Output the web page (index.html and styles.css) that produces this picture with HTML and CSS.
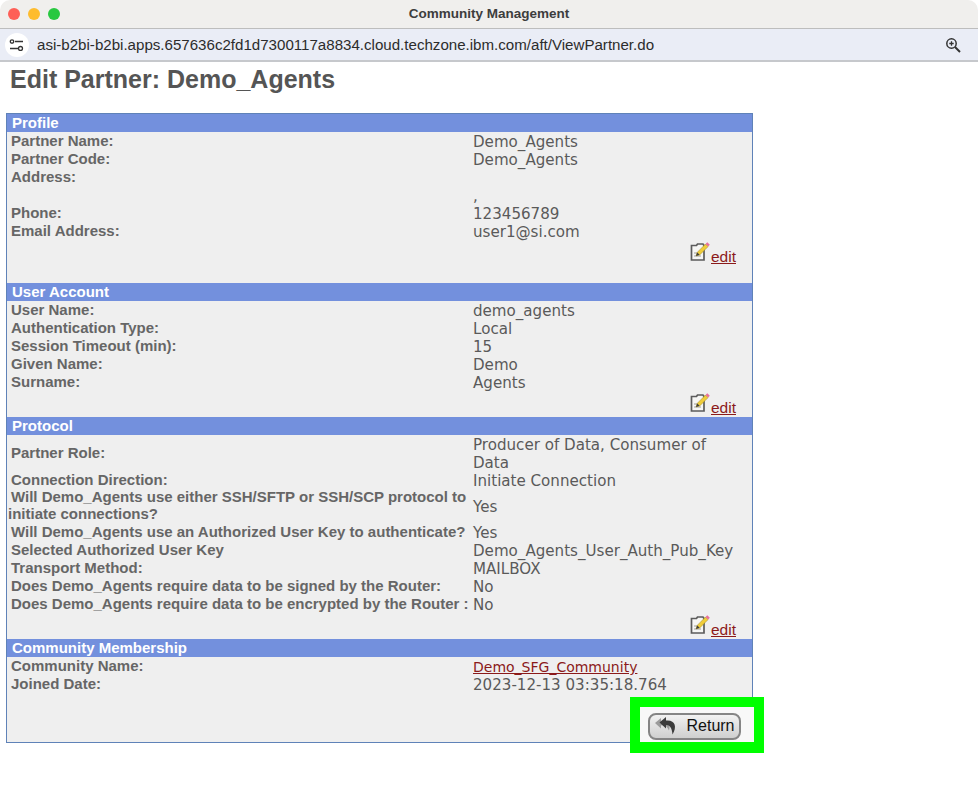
FILE: index.html
```html
<!DOCTYPE HTML>
<html>
<head>
    <title>Community Management</title>
    <meta charset="utf-8">
    <link rel="stylesheet" href="styles.css">
</head>
<body>
<svg class="defs" width="0" height="0">
    <symbol id="edit-icon" viewBox="0 0 20 20">
        <path d="M1.500 3.500h5l1-1.500h5.500l1 1.500v14.500h-12.500z" fill="#f6f6f4" stroke="#5c5c5c" stroke-width="1.700"/>
        <path d="M4 11h4M4 14h7" stroke="#a0a0a0" stroke-width="1"/>
        <path d="M6 14l1.200-3.600 8.300-8.400 2.600 2.600-8.400 8.300z" fill="#f0cd3a" stroke="#9a8420" stroke-width=".5"/>
        <path d="M15.500 2l1.800-1.700 2.500 2.500-1.700 1.800z" fill="#e8719a"/>
        <path d="M6 14l1.200-3.600 2.400 2.400z" fill="#3e3e3e"/>
    </symbol>
</svg>

<!--browser window top-->
<div class="titlebar">
    <div class="lights"><i class="red"></i><i class="yellow"></i><i class="green"></i></div>
    <div class="wintitle">Community Management</div>
</div>
<div class="urlbar">
    <span class="siteinfo">
        <svg width="16" height="12" viewBox="0 0 16 12"><path d="M6 2.500h8M1 9.500h8" stroke="#333" stroke-width="1.500" fill="none"/><circle cx="3" cy="2.500" r="1.700" fill="#fff" stroke="#333" stroke-width="1.300"/><circle cx="11.500" cy="9.500" r="2" fill="#fff" stroke="#333" stroke-width="1.300"/></svg>
    </span>
    <span class="url">asi-b2bi-b2bi.apps.657636c2fd1d7300117a8834.cloud.techzone.ibm.com/aft/ViewPartner.do</span>
    <svg class="zoomicon" width="16" height="16" viewBox="0 0 16 16"><circle cx="6.500" cy="6.500" r="4.700" fill="none" stroke="#333" stroke-width="1.500"/><path d="M10 10l5 5" stroke="#333" stroke-width="2"/><path d="M4.300 6.500h4.400M6.500 4.300v4.400" stroke="#333" stroke-width="1.300"/></svg>
</div>

<!--page content-->
<div class="page">
    <h1>Edit Partner: Demo_Agents</h1>
    <div class="panel">
        <div class="head">Profile</div>
        <div class="row"><div class="lab">Partner Name:</div><div class="val">Demo_Agents</div></div>
        <div class="row"><div class="lab">Partner Code:</div><div class="val">Demo_Agents</div></div>
        <div class="row"><div class="lab">Address:</div><div class="val"></div></div>
        <div class="row"><div class="lab"></div><div class="val">,</div></div>
        <div class="row"><div class="lab">Phone:</div><div class="val">123456789</div></div>
        <div class="row"><div class="lab">Email Address:</div><div class="val">user1@si.com</div></div>
        <div class="editrow tall"><svg class="ico" width="20" height="20"><use href="#edit-icon"/></svg><a href="#">edit</a></div>

        <div class="head">User Account</div>
        <div class="row"><div class="lab">User Name:</div><div class="val">demo_agents</div></div>
        <div class="row"><div class="lab">Authentication Type:</div><div class="val">Local</div></div>
        <div class="row"><div class="lab">Session Timeout (min):</div><div class="val">15</div></div>
        <div class="row"><div class="lab">Given Name:</div><div class="val">Demo</div></div>
        <div class="row"><div class="lab">Surname:</div><div class="val">Agents</div></div>
        <div class="editrow"><svg class="ico" width="20" height="20"><use href="#edit-icon"/></svg><a href="#">edit</a></div>

        <div class="head">Protocol</div>
        <div class="row"><div class="lab">Partner Role:</div><div class="val">Producer of Data, Consumer of Data</div></div>
        <div class="row"><div class="lab">Connection Direction:</div><div class="val">Initiate Connection</div></div>
        <div class="row"><div class="lab">Will Demo_Agents use either SSH/SFTP or SSH/SCP protocol to initiate connections?</div><div class="val">Yes</div></div>
        <div class="row"><div class="lab">Will Demo_Agents use an Authorized User Key to authenticate?</div><div class="val">Yes</div></div>
        <div class="row"><div class="lab">Selected Authorized User Key</div><div class="val">Demo_Agents_User_Auth_Pub_Key</div></div>
        <div class="row"><div class="lab">Transport Method:</div><div class="val">MAILBOX</div></div>
        <div class="row"><div class="lab">Does Demo_Agents require data to be signed by the Router:</div><div class="val">No</div></div>
        <div class="row"><div class="lab">Does Demo_Agents require data to be encrypted by the Router :</div><div class="val">No</div></div>
        <div class="editrow"><svg class="ico" width="20" height="20"><use href="#edit-icon"/></svg><a href="#">edit</a></div>

        <div class="head">Community Membership</div>
        <div class="row"><div class="lab">Community Name:</div><div class="val"><a href="#">Demo_SFG_Community</a></div></div>
        <div class="row"><div class="lab">Joined Date:</div><div class="val">2023-12-13 03:35:18.764</div></div>
        <div class="btnrow">
            <!--green highlight round the button-->
            <div class="marker">
                <button class="btn">
                    <svg width="25" height="19" viewBox="0 0 25 19"><path d="M7 2l-6 5 6 5.500v-3c3-1 6 0 8 5 2-6-1-10.500-8-9.500z" fill="#9c9c9c"/><path d="M12 1l-6.500 5.500 6.500 6v-3.500c3-.5 6 2 6.500 9.500 5-8 2.500-15-6.500-14z" fill="#3c3c3c"/></svg>
                    Return
                </button>
            </div>
        </div>
    </div>
</div>
</body>
</html>
```

FILE: styles.css
```css
*{ margin:0; padding:0; box-sizing:border-box;}
html,body{
    height:100%;
}
body{
    background:#fff;
    font-family:"Liberation Sans",Arial,sans-serif;
}
.defs{
    display:block;
    height:0;
}
.titlebar{
    height:29px;
    background:#f0efed;
    border-bottom:1px solid #bdbdbd;
    border-radius:10px 10px 0 0;
    display:flex;
    align-items:center;
    justify-content:center;
    position:relative;
}
.lights{
    position:absolute;
    left:8px;
    top:8px;
    display:flex;
    gap:8px;
}
.lights i{
    width:12px;
    height:12px;
    border-radius:50%;
}
.lights .red{ background:#fe5f57;}
.lights .yellow{ background:#febc2e;}
.lights .green{ background:#28c840;}
.wintitle{
    font-size:13.500px;
    font-weight:bold;
    color:#3d3d3d;
    margin-bottom:1px;
}
.urlbar{
    height:33px;
    background:#eaedf6;
    border-bottom:2px solid #c6c8cc;
    display:flex;
    align-items:center;
    padding-left:5px;
}
.siteinfo{
    width:24px;
    height:24px;
    border-radius:50%;
    background:#fff;
    display:flex;
    align-items:center;
    justify-content:center;
}
.url{
    margin-left:8px;
    font-size:15.100px;
    color:#2c2c2c;
}
.zoomicon{
    margin-left:auto;
    margin-right:17px;
}
.page{
    padding:0 6px;
}
h1{
    font-size:25px;
    line-height:34px;
    color:#555;
    padding-left:4px;
    height:51px;
}
.panel{
    width:747px;
    background:#efefef;
    border:1px solid #5f82b8;
}
.head{
    height:18px;
    line-height:18px;
    background:#7390dd;
    color:#fff;
    font-size:15px;
    font-weight:bold;
    padding-left:5px;
}
.row{
    display:grid;
    grid-template-columns:466px 1fr;
    align-items:center;
    min-height:18px;
}
.lab{
    font-size:15px;
    font-weight:bold;
    line-height:17px;
    color:#666;
    padding-left:1px;
    text-indent:3px;
    margin-top:-1px;
    margin-bottom:1px;
}
.val{
    font-family:"DejaVu Sans",Verdana,sans-serif;
    font-size:15.100px;
    line-height:18px;
    color:#5a5a5a;
    padding-top:1px;
    margin-bottom:-1px;
    padding-right:10px;
}
.val a{
    font-size:14px;
    color:#8b1a1a;
}
.editrow a{
    color:#8b1a1a;
}
.editrow{
    height:26px;
    display:flex;
    justify-content:flex-end;
    align-items:flex-end;
    padding-right:16px;
    font-size:15.500px;
}
.editrow.tall{
    height:43px;
    padding-bottom:17px;
}
.ico{
    margin-right:1px;
    margin-bottom:4px;
}
.btnrow{
    height:49px;
    position:relative;
}
.marker{
    position:absolute;
    left:623px;
    top:4px;
    width:134px;
    height:56px;
    border:10px solid #0f0;
    border-bottom-width:11px;
    background:#f8f8f8;
    display:flex;
    align-items:flex-end;
    justify-content:flex-start;
    padding:0 0 2px 8px;
}
.btn{
    width:93px;
    height:27px;
    border:2px solid #858585;
    border-radius:8px;
    background:linear-gradient(#f2f2f2,#cfcfcf);
    font-family:"Liberation Sans",sans-serif;
    font-size:16px;
    line-height:18px;
    color:#111;
    display:flex;
    align-items:center;
    justify-content:center;
    gap:7px;
    padding-bottom:2px;
}
```
